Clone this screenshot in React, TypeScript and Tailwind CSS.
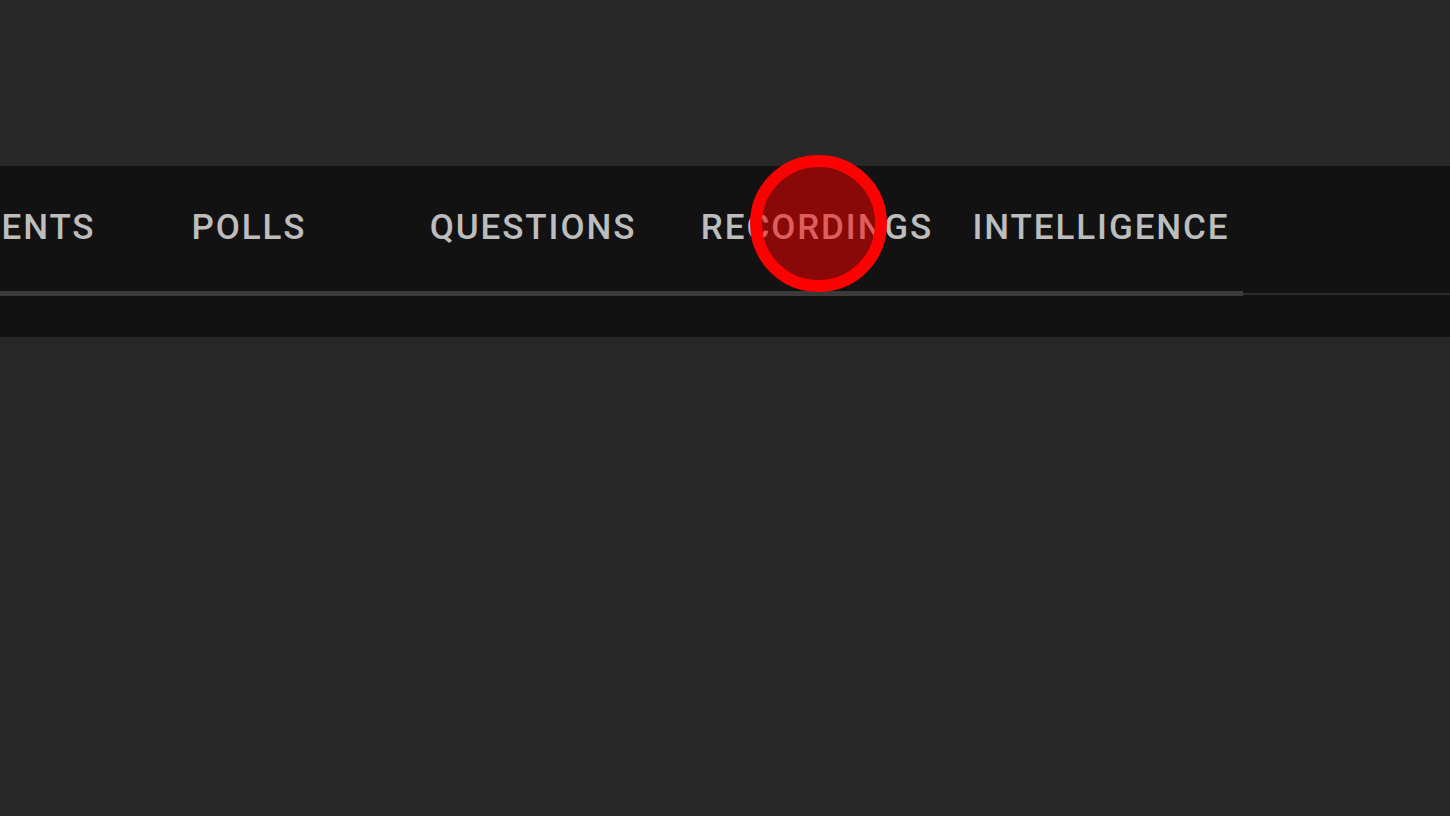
import React from 'react';

const tabs = ['ATTACHMENTS', 'POLLS', 'QUESTIONS', 'RECORDINGS', 'INTELLIGENCE'];

export default function App() {
  return (
    <div
      className="relative w-full h-[816px] overflow-hidden bg-[#282828]"
      style={{ fontFamily: 'Roboto, "Liberation Sans", sans-serif' }}
    >
      <div className="h-[166px]" />

      <div className="bg-[#121212] h-[171px] flex flex-col">
        {/* tab strip, first tab runs off the left edge */}
        <div className="flex h-[125px] ml-[-177px]">
          {tabs.map((t, i) => (
            <div
              key={t}
              className={
                i === 0
                  ? 'w-[284px] shrink-0 flex items-center justify-center pb-[3px] pr-[10px]'
                  : 'w-[284px] shrink-0 flex items-center justify-center pb-[3px]'
              }
            >
              <span className="text-[35px] font-medium tracking-[1.9px] text-[#bdbdbd] leading-none whitespace-nowrap">
                {t}
              </span>
            </div>
          ))}
        </div>

        <div className="flex items-start">
          <div className="w-[1243px] h-[5px] bg-[#3a3a3a]" />
          <div className="flex-1 mt-[2px] h-[2px] bg-[#2c2c2c]" />
        </div>
      </div>

      {/* click indicator */}
      <div className="absolute left-[750px] top-[155px] w-[137px] h-[137px] rounded-full border-[12px] border-[#ff0000] bg-[#ff0000]/50" />
    </div>
  );
}
